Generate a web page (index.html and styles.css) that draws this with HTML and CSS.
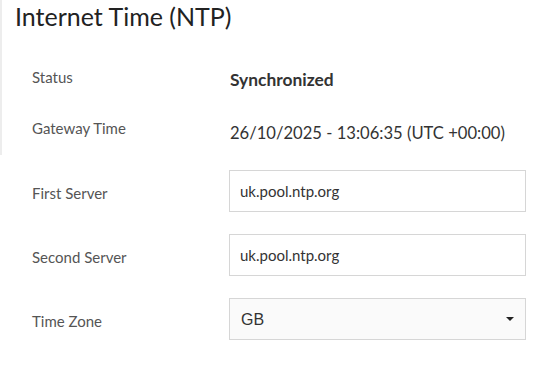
FILE: index.html
```html
<!DOCTYPE html>
<html lang="en">
<head>
    <meta charset="UTF-8">
    <title>Internet Time (NTP)</title>
    <link rel="stylesheet" href="styles.css">
</head>
<body>
    <div class="page">
        <div class="panel">
            <h1 class="page-title">Internet Time (NTP)</h1>
            <div class="info-row">
                <div class="row-label">Status</div>
                <div class="row-value status">Synchronized</div>
            </div>
            <div class="info-row">
                <div class="row-label">Gateway Time</div>
                <div class="row-value">26/10/2025 - 13:06:35 (UTC +00:00)</div>
            </div>
        </div>

        <form class="ntp-form">
            <div class="form-row">
                <label class="row-label" for="firstServer">First Server</label>
                <input class="text-input" id="firstServer" type="text" value="uk.pool.ntp.org">
            </div>
            <div class="form-row">
                <label class="row-label" for="secondServer">Second Server</label>
                <input class="text-input" id="secondServer" type="text" value="uk.pool.ntp.org">
            </div>
            <div class="form-row">
                <label class="row-label" for="timeZone">Time Zone</label>
                <div class="select-wrap">
                    <select class="select-input" id="timeZone">
                        <option>GB</option>
                    </select>
                    <span class="select-caret"></span>
                </div>
            </div>
        </form>
    </div>
</body>
</html>
```

FILE: styles.css
```css
:root {
    --text-color: #333333;
    --label-color: #555555;
    --border-color: #d6d6d6;
    --panel-edge: #ededed;
    --select-bg: #fafafa;
}

body {
    margin: 0;
    background-color: #ffffff;
    color: var(--text-color);
    font-family: Lato, 'Open Sans', sans-serif;
}

.page {
    width: 557px;
}

.panel {
    border-left: 2px solid var(--panel-edge);
}

.page-title {
    margin: 0;
    padding: 0 0 0 13px;
    font-size: 25px;
    font-weight: 400;
    line-height: 32px;
    color: #222222;
}

.info-row {
    display: flex;
    align-items: center;
    height: 52px;
}

.info-row:first-of-type {
    margin-top: 19px;
}

.row-label {
    width: 197px;
    padding-left: 32px;
    font-size: 15px;
    color: var(--label-color);
}

.panel .row-label {
    padding-left: 30px;
    width: 198px;
}

.info-row + .info-row .row-label {
    margin-top: -2px;
}

.row-value {
    font-size: 16.6px;
    padding-top: 4px;
}

.info-row + .info-row .row-value {
    padding-top: 7px;
}

.status {
    font-weight: 700;
    font-size: 17.4px;
}

.ntp-form {
    display: flex;
    flex-direction: column;
    gap: 22px;
    padding-top: 15px;
}

.form-row {
    display: flex;
    align-items: center;
}

.form-row .row-label {
    padding-top: 3px;
}

.text-input,
.select-input {
    box-sizing: border-box;
    width: 297px;
    height: 42px;
    margin: 0;
    border: 1px solid var(--border-color);
    border-radius: 0;
    padding: 0 10px;
    font-family: Lato, 'Open Sans', sans-serif;
    font-size: 15px;
    color: var(--text-color);
    background-color: #ffffff;
    outline: none;
}

.select-wrap {
    position: relative;
}

.select-input {
    appearance: none;
    background-color: var(--select-bg);
    padding-left: 11px;
    font-family: 'Liberation Sans', Arial, sans-serif;
    font-size: 16px;
}

.select-caret {
    position: absolute;
    right: 12px;
    top: 19px;
    width: 0;
    height: 0;
    border-left: 4px solid transparent;
    border-right: 4px solid transparent;
    border-top: 4px solid #222222;
    pointer-events: none;
}
```
